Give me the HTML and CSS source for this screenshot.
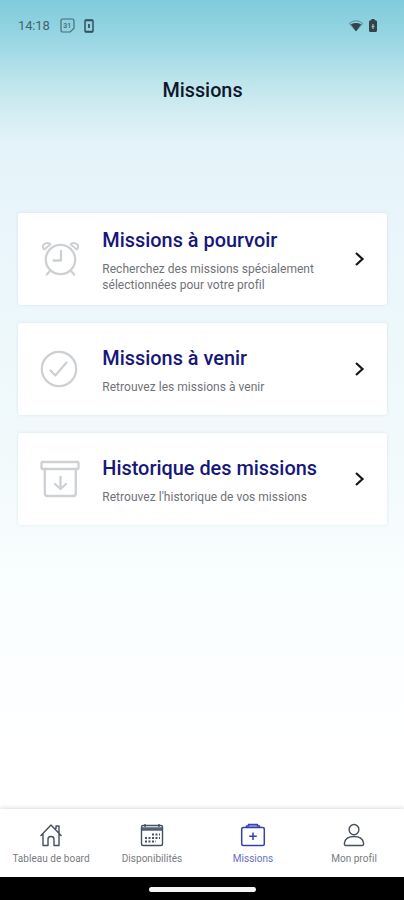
FILE: index.html
```html
<!DOCTYPE html>
<html lang="fr">
<head>
<meta charset="utf-8">
<title>Missions</title>
<link rel="stylesheet" href="styles.css">
</head>
<body>
<div class="screen">
  <header class="status">
    <span class="time">14:18</span>
    <svg class="cal" width="15" height="15" viewBox="0 0 15 15"><path d="M2.800 1h9.400q1.800 0 1.800 1.800v7.400L10.200 14H2.800Q1 14 1 12.200V2.800Q1 1 2.800 1z"/><text x="7.300" y="10" text-anchor="middle">31</text></svg>
    <svg class="device" width="10" height="14" viewBox="0 0 10 14"><rect x="1" y="1" width="8" height="12" rx="1"/><path d="M1 1.500h8M1 12.500h8"/><path class="mark" d="M5 5v4"/></svg>
    <svg class="wifi" width="16" height="14" viewBox="0 0 16 14"><path d="M1.300 4.500Q8-1 14.700 4.500L8 12z"/><path class="fill" d="M2.800 5.200Q8 3 13.200 5.200L8 12.200z"/></svg>
    <svg class="battery" width="8" height="14" viewBox="0 0 8 14"><path class="fill" d="M2.500 0h3v1.300h1q1.500 0 1.500 1.500v8.700Q8 13 6.500 13h-5Q0 13 0 11.500V2.800q0-1.500 1.500-1.500h1z"/><path class="bolt" d="M4 5v5M2.500 7.500h3"/></svg>
  </header>
  <h1>Missions</h1>
  <main class="cards">
    <a class="card">
      <svg class="icon" width="42" height="42" viewBox="0 0 42 42"><circle cx="21.500" cy="21.500" r="14.700"/><path d="M22 13v9.500h-7.500M11 33l-3.200 3.500M32 33l3.200 3.500"/><path class="bell" d="M5.300 11.500q-3-3 0-5.500 4-2.300 6.200.3zM37.700 11.500q3-3 0-5.500-4-2.300-6.200.3z"/></svg>
      <div class="copy"><h2>Missions à pourvoir</h2><p>Recherchez des missions spécialement<br>sélectionnées pour votre profil</p></div>
      <svg class="chevron" width="12" height="16" viewBox="0 0 12 16"><path d="M2 2l6.500 6L2 14"/></svg>
    </a>
    <a class="card">
      <svg class="icon" width="42" height="42" viewBox="0 0 42 42"><circle cx="20" cy="21" r="17.200"/><path d="M11.500 22.500l4.800 5L27.500 14.500"/></svg>
      <div class="copy"><h2>Missions à venir</h2><p>Retrouvez les missions à venir</p></div>
      <svg class="chevron" width="12" height="16" viewBox="0 0 12 16"><path d="M2 2l6.500 6L2 14"/></svg>
    </a>
    <a class="card">
      <svg class="icon" width="42" height="42" viewBox="0 0 42 42"><rect x="2.500" y="4" width="37" height="7" rx="1"/><path d="M5.800 11v24.500q0 2.500 2.500 2.500h26q2.500 0 2.500-2.500V11M21.500 19v12M16 26l5.500 5L27 26"/></svg>
      <div class="copy"><h2>Historique des missions</h2><p>Retrouvez l'historique de vos missions</p></div>
      <svg class="chevron" width="12" height="16" viewBox="0 0 12 16"><path d="M2 2l6.500 6L2 14"/></svg>
    </a>
  </main>
  <nav class="tabs">
    <a class="tab"><svg width="26" height="26" viewBox="0 0 26 26"><path d="M2.500 14L13 3l10.500 11M5 12v11.500h5V17q0-2.500 3-2.500t3 2.500v6.500h5V12M18 7V4h3v7"/></svg><span>Tableau de board</span></a>
    <a class="tab"><svg width="26" height="26" viewBox="0 0 26 26"><rect x="2.500" y="3.500" width="21" height="20" rx="1.500"/><path class="band" d="M3 7h20"/><path d="M6 2v3M20 2v3"/><path class="dots" d="M13 12.500h8M6 16h15M6 19.500h11"/></svg><span>Disponibilités</span></a>
    <a class="tab active"><svg width="26" height="26" viewBox="0 0 26 26"><rect x="1.700" y="5.500" width="22.600" height="18" rx="1.500"/><path d="M6.500 5.500V4h2V2.500h9V4h2v1.500"/><path class="thin" d="M8.500 4h9"/><path d="M13 10.500v7.500M9.200 14.300h7.600"/></svg><span>Missions</span></a>
    <a class="tab"><svg width="26" height="26" viewBox="0 0 26 26"><ellipse cx="13" cy="7.600" rx="4.900" ry="5.100"/><path d="M3.500 21q1-6.500 9.500-6.500t9.500 6.500q.5 2.500-1.500 2.500H5q-2 0-1.500-2.500z"/></svg><span>Mon profil</span></a>
  </nav>
  <footer class="system"><div class="handle"></div></footer>
</div>
</body>
</html>
```
FILE: styles.css
```css
* { box-sizing: border-box; margin: 0; padding: 0; }
body { font-family: Roboto, sans-serif; }
svg { display: block; flex: none; fill: none; }
.screen {
  width: 404px; height: 900px; display: flex; flex-direction: column; overflow: hidden;
  background: linear-gradient(#80cbdc 0, #8fd2e0 25px, #a9dce8 58px, #b9e3ea 76px, #d1ecf2 110px, #e4f3f9 145px, #e9f5fb 220px, #edf8fb 330px, #f1f9fb 440px, #f8fdfe 560px, #fcfeff 670px, #fff 760px);
}
.status { height: 52px; padding: 0 27px 1px 18px; display: flex; align-items: center; color: #426570; }
.time { width: 42px; font-size: 13px; letter-spacing: -.15px; white-space: nowrap; }
.status svg { stroke: #456d78; stroke-width: 1.2; }
.cal text { fill: #426570; stroke: none; font-size: 7px; font-weight: 500; }
.status .device { margin-left: 9px; stroke: #34525c; stroke-width: 1.500; }
.device .mark { stroke-width: 1.800; }
.status .wifi { margin-left: auto; margin-right: 5px; stroke: #5d8590; stroke-width: 1; }
.status .fill { fill: #30444a; stroke: none; }
.bolt { stroke: #a5bfc4; }
h1 { height: 76px; line-height: 78px; text-align: center; font-size: 19.800px; font-weight: 500; color: #10172b; padding-left: 1px; }
.cards { flex: 1; padding: 85px 17px 0 18px; display: flex; flex-direction: column; gap: 18px; }
.card {
  height: 92px; padding: 0 21px; display: flex; align-items: center;
  background: #fff; border-radius: 3px; box-shadow: 0 0 3px rgba(90, 130, 140, .17);
}
.icon { stroke: #cdd1d4; stroke-width: 2.300; stroke-linecap: round; stroke-linejoin: round; }
.icon .bell { stroke-width: 2; }
.copy { flex: 1; margin-left: 21.300px; padding-top: 2px; white-space: nowrap; }
h2 { font-size: 19.900px; line-height: 25px; font-weight: 500; color: #17177b; }
p { margin-top: 8px; font-size: 12px; line-height: 16px; letter-spacing: .03px; color: #707277; }
.chevron { stroke: #171717; stroke-width: 2.200; }
.tabs { height: 68px; display: flex; background: #fff; box-shadow: 0 -1px 4px rgba(0, 0, 0, .14); }
.tab { flex: 1; padding: 13px 0 0 1px; display: flex; flex-direction: column; align-items: center; color: #777c80; font-size: 10px; line-height: 14px; letter-spacing: .03px; white-space: nowrap; }
.tab svg { stroke: #44515e; stroke-width: 1.400; stroke-linejoin: round; margin-bottom: 4px; }
.tab .band { stroke-width: 3.500; stroke: #526272; }
.tab .dots { stroke-width: 2; stroke-dasharray: 2 1.500; }
.tab.active { color: #6870bf; }
.tab.active svg { stroke: #3541ae; stroke-width: 1.500; }
.tab .thin { stroke-width: 1; }
.system { height: 23px; padding: 1px 0 0 1px; background: #000; display: flex; align-items: center; justify-content: center; }
.handle { width: 107px; height: 5px; border-radius: 3px; background: #f5f5f5; }
```
